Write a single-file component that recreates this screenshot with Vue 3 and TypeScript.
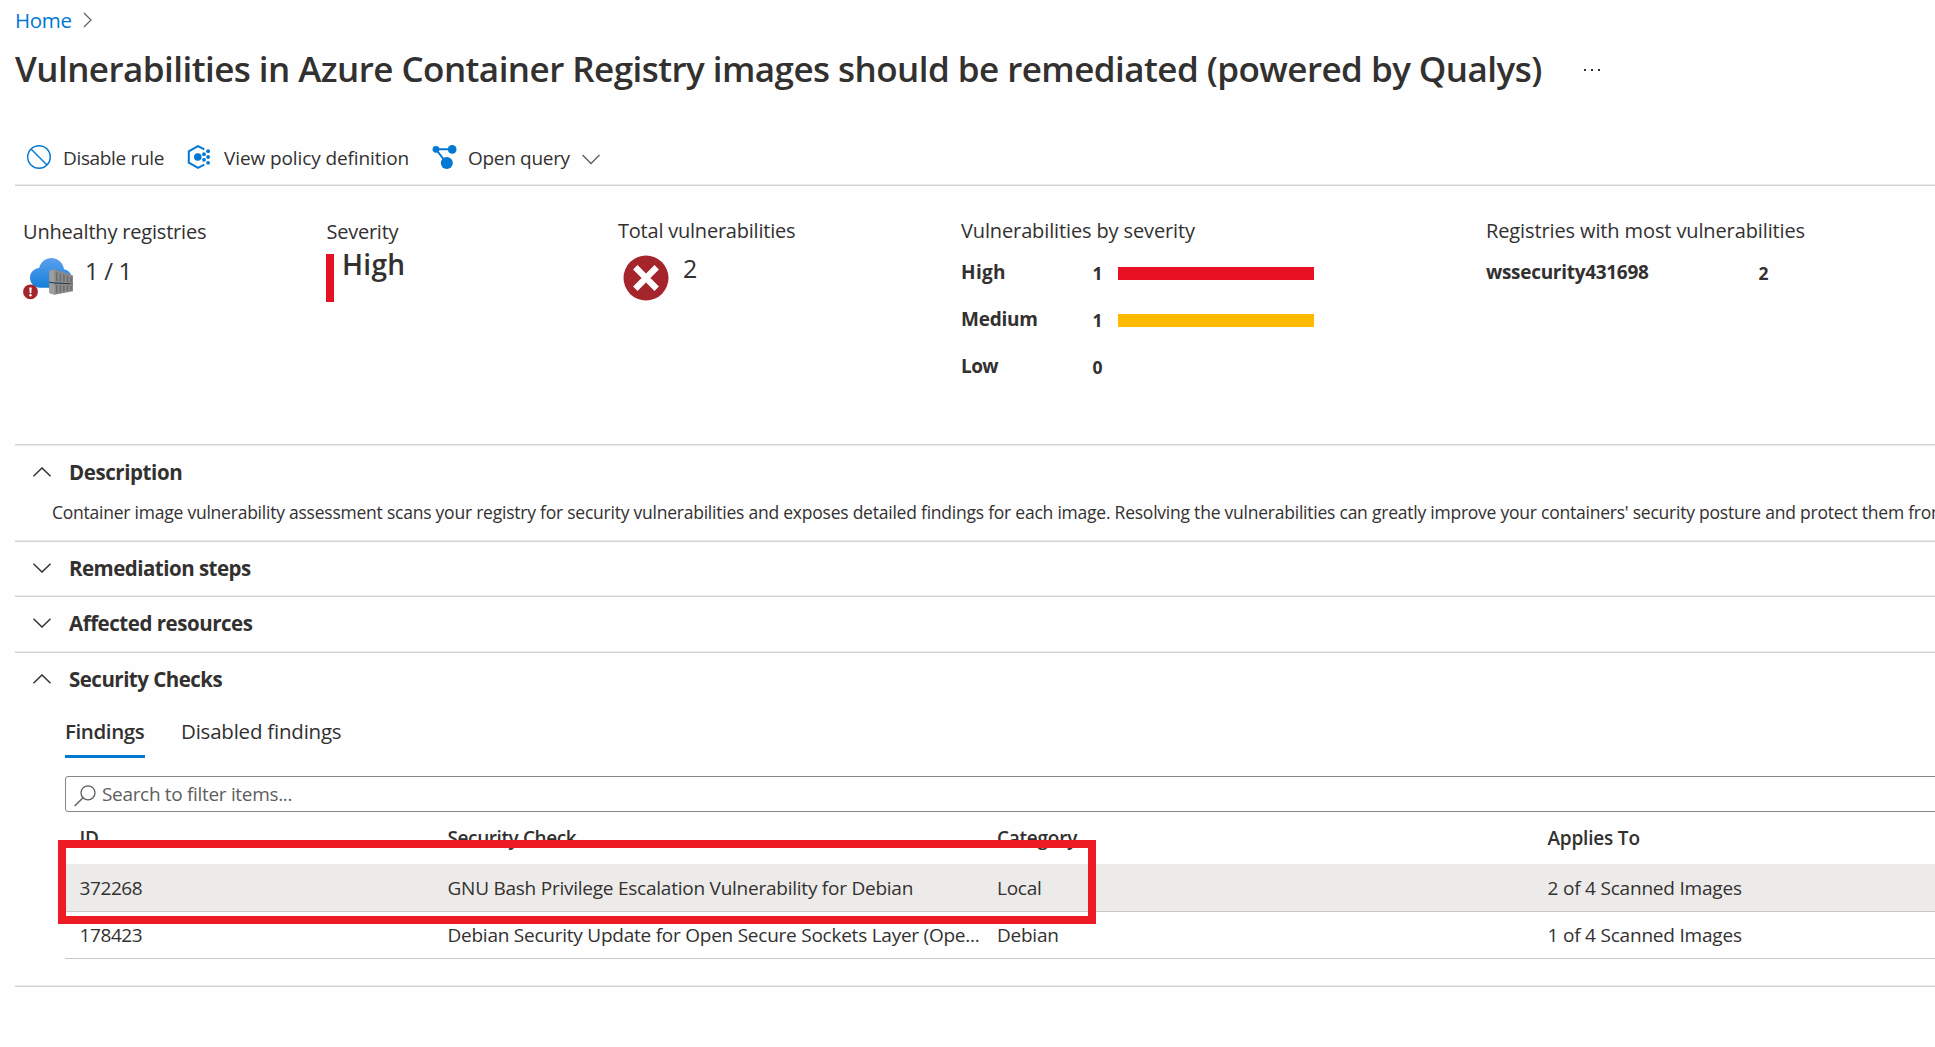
<script setup lang="ts">
interface SeverityRow {
  name: string
  count: number
  color: string
}

interface Finding {
  id: string
  check: string
  category: string
  appliesTo: string
  selected: boolean
}

const severities: SeverityRow[] = [
  { name: 'High', count: 1, color: '#e81123' },
  { name: 'Medium', count: 1, color: '#ffb900' },
  { name: 'Low', count: 0, color: '#0078d4' },
]

const barWidth = (count: number): number => count * 196

const findings: Finding[] = [
  {
    id: '372268',
    check: 'GNU Bash Privilege Escalation Vulnerability for Debian',
    category: 'Local',
    appliesTo: '2 of 4 Scanned Images',
    selected: true,
  },
  {
    id: '178423',
    check: 'Debian Security Update for Open Secure Sockets Layer (Ope...',
    category: 'Debian',
    appliesTo: '1 of 4 Scanned Images',
    selected: false,
  },
]
</script>

<template>
  <main class="page">
    <nav class="breadcrumb">
      <a class="home">Home</a>
      <svg class="crumb-arrow" width="10" height="16" viewBox="0 0 10 16">
        <path d="M1 1 L8 8 L1 15" fill="none" stroke="#605e5c" stroke-width="1.2" />
      </svg>
    </nav>

    <header class="title-row">
      <h1>Vulnerabilities in Azure Container Registry images should be remediated (powered by Qualys)</h1>
      <svg class="more" width="18" height="4" viewBox="0 0 18 4">
        <rect x="1" y="1" width="2" height="2" fill="#323130" />
        <rect x="8" y="1" width="2" height="2" fill="#323130" />
        <rect x="15" y="1" width="2" height="2" fill="#323130" />
      </svg>
    </header>

    <div class="toolbar">
      <div class="tool disable">
        <svg width="24" height="24" viewBox="0 0 24 24">
          <circle cx="12" cy="12" r="11.3" fill="none" stroke="#0078d4" stroke-width="1.4" />
          <path d="M4 4 L20 20" stroke="#0078d4" stroke-width="1.4" />
        </svg>
        <span>Disable rule</span>
      </div>
      <div class="tool policy">
        <svg width="24" height="24" viewBox="0 0 24 24">
          <path
            d="M17.3 4.3 L11 1.1 L1.8 6.4 V17.6 L11 22.8 L17.3 19.6"
            fill="none"
            stroke="#0078d4"
            stroke-width="2"
          />
          <circle cx="10.8" cy="12" r="3.8" fill="#0078d4" />
          <g fill="#0078d4">
            <circle cx="17" cy="9.2" r="1.9" />
            <circle cx="17" cy="14.8" r="1.9" />
            <circle cx="21.1" cy="6.2" r="1.9" />
            <circle cx="21.1" cy="12" r="1.9" />
            <circle cx="21.1" cy="17.8" r="1.9" />
          </g>
        </svg>
        <span>View policy definition</span>
      </div>
      <div class="tool query">
        <svg width="26" height="24" viewBox="0 0 26 24">
          <path d="M4 4.3 H20 M4 4.3 L14.5 18" stroke="#0078d4" stroke-width="1.9" fill="none" />
          <circle cx="4" cy="4.3" r="3.4" fill="#0078d4" />
          <circle cx="20.2" cy="4.4" r="4.3" fill="#0078d4" />
          <circle cx="14.8" cy="18" r="6" fill="#0078d4" />
        </svg>
        <span>Open query</span>
        <svg class="caret" width="18" height="11" viewBox="0 0 18 11">
          <path d="M0.5 1 L9 9.5 L17.5 1" fill="none" stroke="#605e5c" stroke-width="1.3" />
        </svg>
      </div>
    </div>

    <section class="stats">
      <div class="stat registries">
        <div class="label low">Unhealthy registries</div>
        <div class="value">
          <svg width="50" height="42" viewBox="0 0 50 42">
            <defs>
              <linearGradient id="cloud" x1="0" y1="0" x2="0" y2="1">
                <stop offset="0" stop-color="#5ea0ef" />
                <stop offset="1" stop-color="#1380da" />
              </linearGradient>
            </defs>
            <path
              d="M17 29.7 C11 29.7 7 25 7 19.8 C7 14.4 11 10.6 16.2 10 C17.5 4 22.6 0 28.4 0 C35 0 40.3 5 41 11.3 C45.5 12 48.7 15.8 48.7 20.3 C48.7 25.5 44.5 29.7 39.3 29.7 Z"
              fill="url(#cloud)"
            />
            <path d="M26.3 13 L31.5 11.3 L50 17.5 V25.5 L31.5 24.5 L26.3 23.6 Z" fill="#8a8a8a" />
            <path d="M26.3 24.8 L31.5 25.6 L50 26.3 V33.3 L31.5 36.8 L26.3 35 Z" fill="#8a8a8a" />
            <path d="M26.3 13 L31.5 11.3 V24.5 L26.3 23.6 Z M26.3 24.8 L31.5 25.6 V36.8 L26.3 35 Z" fill="#9e9e9e" />
            <path
              d="M33.7 14.3 V23 M37.3 15.5 V23.4 M40.9 16.6 V23.7 M44.5 17.8 V24 M48 19 V24.2 M33.7 27.3 V34.8 M37.3 27.4 V34.2 M40.9 27.6 V33.5 M44.5 27.7 V32.9 M48 27.9 V32.2"
              stroke="#666"
              stroke-width="1.2"
            />
            <path d="M26.3 24.2 L31.5 25 L50 25.9" fill="none" stroke="#323130" stroke-width="0.9" />
            <circle cx="7.5" cy="33.8" r="7.4" fill="#a4262c" />
            <path d="M6.3 29.5 H8.7 L8.3 35.2 H6.7 Z" fill="#fff" />
            <circle cx="7.5" cy="37.2" r="1.2" fill="#fff" />
          </svg>
          <span class="ratio">1 / 1</span>
        </div>
      </div>

      <div class="stat severity">
        <div class="label low">Severity</div>
        <div class="value">
          <span class="severity-mark"></span>
          <span class="severity-name">High</span>
        </div>
      </div>

      <div class="stat total">
        <div class="label">Total vulnerabilities</div>
        <div class="value">
          <svg width="46" height="46" viewBox="0 0 46 46">
            <circle cx="23" cy="23" r="22.5" fill="#a4262c" />
            <path d="M12.3 12.3 L33.7 33.7 M33.7 12.3 L12.3 33.7" stroke="#fff" stroke-width="6.2" />
          </svg>
          <span class="total-count">2</span>
        </div>
      </div>

      <div class="stat by-severity">
        <div class="label">Vulnerabilities by severity</div>
        <div v-for="s in severities" :key="s.name" class="sev-row">
          <span class="sev-name" :class="s.name.toLowerCase()">{{ s.name }}</span>
          <span class="sev-count">{{ s.count }}</span>
          <span class="sev-bar" :style="{ width: barWidth(s.count) + 'px', background: s.color }"></span>
        </div>
      </div>

      <div class="stat most">
        <div class="label">Registries with most vulnerabilities</div>
        <div class="sev-row">
          <span class="reg-name">wssecurity431698</span>
          <span class="reg-count">2</span>
        </div>
      </div>
    </section>

    <section class="panel description">
      <h2>
        <svg class="chev" width="18" height="10" viewBox="0 0 18 10"><path d="M0.5 9.3 L9 0.9 L17.5 9.3" /></svg>
        <span class="wide">Description</span>
      </h2>
      <p>
        Container image vulnerability assessment scans your registry for security vulnerabilities and exposes detailed
        findings for each image. Resolving the vulnerabilities can greatly improve your containers' security posture and
        protect them from
      </p>
    </section>

    <section class="panel remediation">
      <h2>
        <svg class="chev" width="18" height="10" viewBox="0 0 18 10"><path d="M0.5 0.7 L9 9.1 L17.5 0.7" /></svg>
        <span>Remediation steps</span>
      </h2>
    </section>

    <section class="panel resources">
      <h2>
        <svg class="chev" width="18" height="10" viewBox="0 0 18 10"><path d="M0.5 0.7 L9 9.1 L17.5 0.7" /></svg>
        <span>Affected resources</span>
      </h2>
    </section>

    <section class="panel checks">
      <h2>
        <svg class="chev" width="18" height="10" viewBox="0 0 18 10"><path d="M0.5 9.3 L9 0.9 L17.5 9.3" /></svg>
        <span>Security Checks</span>
      </h2>

      <div class="findings">
        <div class="tabs">
          <div class="tab active">Findings</div>
          <div class="tab">Disabled findings</div>
        </div>

        <div class="search">
          <svg width="22" height="22" viewBox="0 0 22 22">
            <circle cx="14" cy="7.8" r="7" fill="none" stroke="#605e5c" stroke-width="1.3" />
            <path d="M9 12.7 L0.7 21" stroke="#605e5c" stroke-width="1.4" />
          </svg>
          <span>Search to filter items...</span>
        </div>

        <div class="grid">
          <div class="row head">
            <span class="id">ID</span>
            <span class="check">Security Check</span>
            <span class="cat">Category</span>
            <span class="applies">Applies To</span>
          </div>
          <div v-for="f in findings" :key="f.id" class="row" :class="{ selected: f.selected }">
            <span class="id">{{ f.id }}</span>
            <span class="check">{{ f.check }}</span>
            <span class="cat">{{ f.category }}</span>
            <span class="applies">{{ f.appliesTo }}</span>
          </div>
          <div class="highlight"></div>
        </div>
      </div>
    </section>
    <div class="end-rule"></div>
  </main>
</template>

<style>
body {
  margin: 0;
  background: #fefefe;
  overflow: hidden;
}
</style>

<style scoped>
.page {
  box-sizing: border-box;
  width: 1935px;
  height: 1047px;
  padding-left: 15px;
  overflow: hidden;
  background: #fefefe;
  color: #323130;
  font-family: 'Open Sans', 'Noto Sans', sans-serif;
  white-space: nowrap;
}

svg {
  display: block;
  flex: none;
}

.breadcrumb {
  display: flex;
  align-items: center;
  height: 40px;
}

.home {
  width: 68px;
  font-size: 20.5px;
  letter-spacing: -0.3px;
  color: #0078d4;
}

.title-row {
  display: flex;
  align-items: center;
  height: 56px;
}

h1 {
  margin: 2px 0 0;
  width: 1568px;
  font-size: 35px;
  font-weight: 600;
  line-height: 56px;
  letter-spacing: -0.548px;
}

.more {
  margin-top: 4px;
}

.toolbar {
  display: flex;
  align-items: center;
  height: 53px;
  margin-top: 35px;
  padding: 0 0 1px 12px;
  border-bottom: 1px solid #d2d2d2;
  box-shadow: inset 0 -1px 0 #e9e9e9;
  font-size: 19px;
}

.tool {
  display: flex;
  align-items: center;
  gap: 12px;
}

.tool svg {
  margin-bottom: 1px;
}

.tool.disable {
  width: 160px;
  letter-spacing: -0.34px;
}

.tool.policy {
  width: 245px;
  gap: 13px;
  letter-spacing: -0.1px;
}

.tool.query {
  gap: 10px;
  letter-spacing: -0.31px;
}

.tool .caret {
  margin: 4px 0 0 2px;
}

.stats {
  display: grid;
  grid-template-columns: 303px 292px 343px 525px 1fr;
  height: 229px;
  padding: 29px 0 0 8px;
  box-sizing: content-box;
}

.label {
  height: 31px;
  font-size: 20px;
  line-height: 31px;
  letter-spacing: -0.22px;
}

.label.low {
  padding-top: 1px;
}

.registries .label {
  letter-spacing: -0.186px;
}

.severity .label {
  padding-left: 0.5px;
  letter-spacing: -0.25px;
}

.by-severity .label {
  letter-spacing: -0.13px;
}

.most .label {
  letter-spacing: -0.118px;
}

.value {
  display: flex;
  align-items: flex-start;
}

.registries .value {
  margin-top: 11px;
}

.ratio {
  margin-left: 12px;
  font-size: 24px;
  line-height: 26px;
  letter-spacing: -0.4px;
}

.severity .value {
  margin-top: 7px;
}

.severity-mark {
  width: 8px;
  height: 48px;
  background: #e81123;
}

.severity-name {
  margin-left: 8px;
  font-size: 28px;
  font-weight: 600;
  line-height: 20px;
  letter-spacing: 0.3px;
}

.total .value {
  margin: 9px 0 0 5px;
}

.total-count {
  margin-left: 14px;
  font-size: 25px;
  line-height: 27px;
}

.sev-row {
  display: flex;
  align-items: center;
  height: 47px;
  font-size: 19px;
  font-weight: 700;
}

.sev-name {
  width: 121px;
  margin-bottom: 3px;
}

.sev-name.high {
  letter-spacing: 0.35px;
}

.sev-name.medium {
  letter-spacing: -0.25px;
}

.sev-name.low {
  letter-spacing: -0.6px;
}

.label + .sev-row {
  margin-top: 4px;
}

.sev-count {
  width: 31px;
  margin-bottom: 1px;
  text-align: center;
  font-size: 17.5px;
}

.sev-bar {
  height: 13px;
  margin-left: 5px;
}

.reg-name {
  width: 272.5px;
  margin-bottom: 3px;
  letter-spacing: -0.296px;
}

.reg-count {
  margin-bottom: 1px;
  font-size: 17.5px;
}

.panel {
  box-sizing: border-box;
  border-top: 1px solid #e9e9e9;
  box-shadow: inset 0 1px 0 #d2d2d2;
  padding-top: 1px;
}

h2 {
  display: flex;
  align-items: center;
  gap: 18px;
  height: 52px;
  margin: 0;
  padding-left: 18px;
  font-size: 20.5px;
  font-weight: 700;
  letter-spacing: -0.52px;
}

h2 .wide {
  letter-spacing: -0.42px;
}

.description {
  height: 96px;
  border-top-color: #d2d2d2;
  box-shadow: inset 0 1px 0 #e9e9e9;
}

.chev {
  fill: none;
  stroke: #323130;
  stroke-width: 1.4;
}

.description p {
  margin: 0 0 0 37px;
  font-size: 17.5px;
  line-height: 28px;
  letter-spacing: -0.232px;
}

.remediation {
  height: 55px;
}

.resources {
  height: 56px;
}

.resources h2 {
  letter-spacing: -0.47px;
}

.checks {
  height: 334px;
}

.findings {
  padding-left: 50px;
}

.tabs {
  display: flex;
  gap: 36px;
  height: 53px;
}

.tab {
  box-sizing: border-box;
  height: 53px;
  padding-top: 3px;
  font-size: 20.5px;
  line-height: 46px;
  letter-spacing: -0.22px;
}

.tab.active {
  width: 80px;
  border-bottom: 3px solid #0078d4;
  font-weight: 600;
  letter-spacing: -0.389px;
}

.search {
  box-sizing: border-box;
  display: flex;
  align-items: center;
  gap: 6px;
  width: 1900px;
  height: 36px;
  margin-top: 18px;
  padding-left: 8px;
  border: 1px solid #8a8886;
  border-radius: 3px;
  background: #fff;
  color: #605e5c;
  font-size: 19px;
  letter-spacing: -0.322px;
}

.search svg {
  margin-top: 3px;
}

.search span {
  margin-bottom: 1px;
}

.grid {
  position: relative;
}

.row {
  box-sizing: border-box;
  display: grid;
  grid-template-columns: 368px 549.5px 550.5px 1fr;
  align-items: center;
  height: 47px;
  padding-left: 14.5px;
  border-bottom: 1px solid #c8c8c8;
  font-size: 19px;
  letter-spacing: -0.24px;
}

.row .applies {
  letter-spacing: -0.2px;
}

.row.selected {
  height: 48px;
  background: #edebe9;
}

.row.head {
  height: 52px;
  border-bottom: 0;
  font-weight: 600;
}

.head .check {
  letter-spacing: -0.4px;
}

.row .id {
  letter-spacing: -0.4px;
}

.highlight {
  position: absolute;
  left: -7px;
  top: 28px;
  box-sizing: border-box;
  width: 1038px;
  height: 84px;
  border: 8px solid #ed1c24;
}

.end-rule {
  height: 2px;
  background: linear-gradient(#e9e9e9 50%, #d2d2d2 50%);
}
</style>
